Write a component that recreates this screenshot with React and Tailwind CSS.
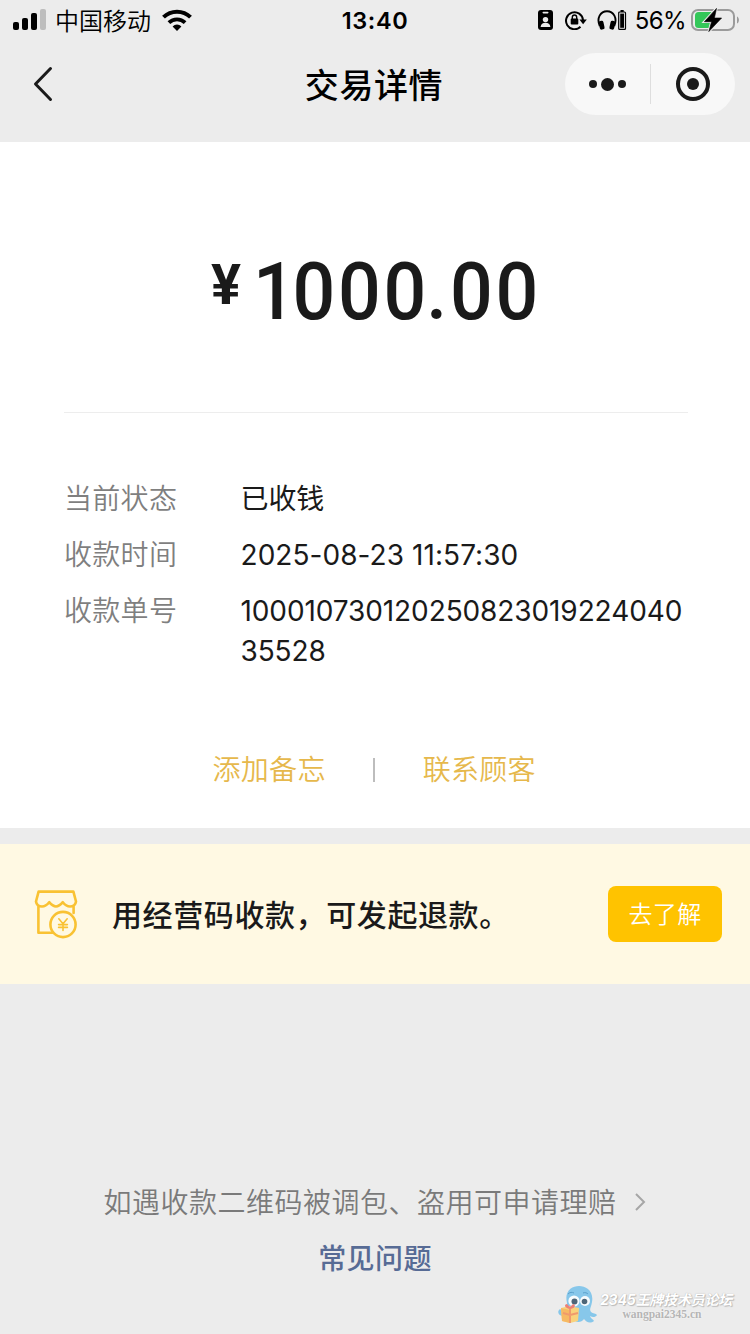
const details = [
  { label: "当前状态", value: "已收钱", tracking: "tracking-[-0.100px]" },
  { label: "收款时间", value: "2025-08-23 11:57:30", tracking: "tracking-[0.060px]" },
  { label: "收款单号", value: "100010730120250823019224040 35528", tracking: "tracking-[-0.100px]" },
];

function SignalIcon() {
  return (
    <svg width="33" height="22" viewBox="0 0 33 22">
      <rect x="0" y="13" width="6" height="8" rx="2" fill="#000" />
      <rect x="9" y="9" width="6" height="12" rx="2" fill="#000" />
      <rect x="18" y="4" width="6" height="17" rx="2" fill="#000" />
      <rect x="27" y="0" width="6" height="21" rx="2" fill="#bdbdbd" />
    </svg>
  );
}

function WifiIcon() {
  return (
    <svg width="30" height="22" viewBox="0 0 30 22">
      <path d="M1.5 8.2a19.2 19.2 0 0 1 27 0" fill="none" stroke="#000" strokeWidth="4" />
      <path d="M6.9 13.6a11.6 11.6 0 0 1 16.2 0" fill="none" stroke="#000" strokeWidth="3.8" />
      <path d="M15 22l-4.4-4.6a6.2 6.2 0 0 1 8.8 0z" fill="#000" />
    </svg>
  );
}

function BadgeIcon() {
  return (
    <svg width="15" height="20" viewBox="0 0 15 20">
      <rect width="15" height="20" rx="3" fill="#000" />
      <rect x="4.5" y="1.8" width="6" height="1.6" rx=".8" fill="#ececec" />
      <circle cx="7.5" cy="9.6" r="2.7" fill="#ececec" />
      <path d="M2.6 17c.4-2.9 2.1-4.2 4.9-4.2s4.5 1.3 4.9 4.2z" fill="#ececec" />
    </svg>
  );
}

function RotationLockIcon() {
  return (
    <svg width="22" height="20" viewBox="0 0 22 20">
      <path d="M15.5 16.8A8.5 8.5 0 1 1 18 10" fill="none" stroke="#000" strokeWidth="2" />
      <path d="M14.4 9.6h7.4l-3.7 4.6z" fill="#000" />
      <rect x="5.7" y="8.6" width="7.6" height="5.8" rx="1" fill="#000" />
      <path d="M7.3 9V7.2a2.2 2.2 0 0 1 4.4 0V9" fill="none" stroke="#000" strokeWidth="1.4" />
    </svg>
  );
}

function HeadphonesIcon() {
  return (
    <svg width="30" height="20" viewBox="0 0 30 20">
      <path d="M2.8 16C-.8 8 3.5 1.3 10 1.3S20.8 8 17.2 16" fill="none" stroke="#000" strokeWidth="1.9" />
      <rect x="2.2" y="10.8" width="4.8" height="8.8" rx="1.8" fill="#000" transform="rotate(-12 4.6 15)" />
      <rect x="13" y="10.8" width="4.8" height="8.8" rx="1.8" fill="#000" transform="rotate(12 15.4 15)" />
      <rect x="21.7" y="2" width="6.8" height="17.4" rx="1" fill="none" stroke="#000" strokeWidth="1.2" />
      <rect x="23.2" y="3.6" width="3.8" height="14.2" fill="#000" />
      <rect x="23.5" y="0" width="3.2" height="2" fill="#000" />
    </svg>
  );
}

function BatteryIcon() {
  return (
    <svg width="49" height="24" viewBox="0 0 49 24">
      <rect x="1" y="2" width="42" height="20" rx="6" fill="none" stroke="#9b9b9b" strokeWidth="2" />
      <path d="M46 8.5c2.6 1 2.6 6 0 7z" fill="#9b9b9b" />
      <path d="M7.5 4H21v16H7.5A3.5 3.5 0 0 1 4 16.500v-9A3.500 3.500 0 0 1 7.500 4z" fill="#34c759" />
      <path d="M25.500.4L13.400 13.700h7.200L17.800 23.600 30.600 10h-7.200z" fill="#ececec" stroke="#ececec" strokeWidth="2.600" />
      <path d="M25.500.4L13.400 13.700h7.200L17.800 23.600 30.600 10h-7.200z" fill="#000" stroke="#000" strokeWidth=".6" />
    </svg>
  );
}

function ShopIcon() {
  return (
    <svg width="44" height="50" viewBox="0 0 44 50" fill="none" stroke="#f9c233" strokeWidth="2.600" strokeLinejoin="round" strokeLinecap="round">
      <path d="M4.600 2.600H39.400L42 12.500C41.500 16 39 17.500 36 17.500S31 16 28.800 13.200C26.500 16 24.500 17.500 22 17.500S17.500 16 15.200 13.200C13 16 11 17.500 8 17.500S2.500 16 2 12.500Z" />
      <path d="M4.400 18v25.800h14M39.600 18v6" />
      <circle cx="29" cy="35.500" r="12.600" />
      <path d="M24.800 29.800l4.200 5 4.200-5M29 34.800v6.600M24.600 35.600h8.800M24.600 38.400h8.800" strokeWidth="1.600" />
    </svg>
  );
}

function Octopus() {
  return (
    <svg width="40" height="40" viewBox="0 0 40 40">
      <path d="M9 18C6 6 14 1 21 1s15 5 13 16c-1 6-3 7-1 10 2 2 5 1 6 3-2 3-5 2-7 1 1 3 3 3 4 5-4 3-8 1-10-2-2 3-6 4-9 2L4 31c-4-1-5-5-2-7 2 2 5 2 7 1z" fill="#87c7ea" />
      <circle cx="16" cy="16" r="5.600" fill="#f7fbfd" />
      <circle cx="27" cy="16" r="5" fill="#f7fbfd" />
      <circle cx="16.500" cy="16.500" r="3" fill="#4d6678" />
      <circle cx="26.500" cy="16.500" r="2.800" fill="#4d6678" />
      <path d="M10 9c2-2 4-2 6-1M25 8c2-1 4 0 5 1" fill="none" stroke="#5b9fca" strokeWidth="1" />
      <path d="M3 23l8-2 10 2-1 13-8 2-8-2z" fill="#f9d27c" />
      <path d="M3 23l9 2v13l-8-2z" fill="#f6b964" />
      <path d="M12 24v14M5 28l7 2 8-2" fill="none" stroke="#f09a6c" strokeWidth="2" />
      <path d="M12 24c-6-1-6-5-3-5l3 3 3-3c4 1 1 5-3 5z" fill="#ec8177" />
    </svg>
  );
}

function StatusBar() {
  return (
    <div className="grid h-10 grid-cols-[1fr_auto_1fr] items-center text-black">
      <div className="flex items-center pl-[13px]">
        <SignalIcon />
        <span className="ml-[9px] mr-[11px] pt-[3px] text-[24px] font-[350] leading-[37px]">中国移动</span>
        <WifiIcon />
      </div>
      <span className="pt-[2px] text-[23.5px] font-semibold leading-[38px] tracking-[0.6px]">13:40</span>
      <div className="flex items-center justify-end pr-[10px]">
        <BadgeIcon />
        <span className="ml-[12px] flex"><RotationLockIcon /></span>
        <span className="ml-[10px] flex"><HeadphonesIcon /></span>
        <span className="ml-[8px] mr-[5px] pt-[2px] text-[24px] leading-[38px] tracking-[-0.6px]">56%</span>
        <BatteryIcon />
      </div>
    </div>
  );
}

function NavBar() {
  return (
    <div className="grid h-[102px] grid-cols-[1fr_auto_1fr] items-start">
      <svg className="ml-[33px] mt-[26px]" width="20" height="36" viewBox="0 0 20 36">
        <path d="M17.5 2.5L2.5 18l15 15.5" fill="none" stroke="#1a1a1a" strokeWidth="3" strokeLinecap="round" strokeLinejoin="round" />
      </svg>
      <h1 className="mt-[22px] pr-[2px] text-[34px] font-medium leading-[48px] tracking-[0.6px] text-black">交易详情</h1>
      <div className="mr-[15px] mt-[13px] flex h-[62px] w-[170px] items-center justify-self-end rounded-full bg-[#f8f8f8]">
        <div className="flex flex-1 items-center justify-center gap-1">
          <span className="size-2 rounded-full bg-[#1a1a1a]" />
          <span className="size-[13px] rounded-full bg-[#1a1a1a]" />
          <span className="size-2 rounded-full bg-[#1a1a1a]" />
        </div>
        <div className="h-10 w-px bg-[#dedede]" />
        <div className="flex flex-1 items-center justify-center">
          <div className="flex size-[34px] items-center justify-center rounded-full border-4 border-[#1a1a1a]">
            <span className="size-3 rounded-full bg-[#1a1a1a]" />
          </div>
        </div>
      </div>
    </div>
  );
}

export default function App() {
  return (
    <div className="flex h-[1334px] w-[750px] flex-col overflow-hidden bg-[#ececec] font-[Inter,'Noto_Sans_CJK_SC',sans-serif]">
      <StatusBar />
      <NavBar />

      <main className="h-[686px] bg-white pl-16 pr-[62px]">
        <div className="flex h-[271px] items-start border-b border-[#ededed] pl-[147px] pt-[102px] font-[Roboto,sans-serif] text-[#1a1a1a]">
          <span className="mt-[11px] w-[42px] text-[56px] font-bold leading-[60px]">¥</span>
          <span className="origin-left scale-x-94 text-[80px] font-medium leading-[96px] tracking-[3px]">
            <span className="tracking-[-3.500px]">1</span>00<span className="tracking-[0px]">0</span>.00
          </span>
        </div>

        <dl className="mt-[66px] flex flex-col gap-4">
          {details.map((d) => (
            <div key={d.label} className="flex text-[28px] leading-10">
              <dt className="w-[176.5px] shrink-0 pt-px font-[350] leading-[39px] tracking-[0.3px] text-[#7f7f7f]">{d.label}</dt>
              <dd className={`w-[446px] text-[#1a1a1a] ${d.tracking}`}>{d.value}</dd>
            </div>
          ))}
        </dl>

        <div className="mt-[79px] flex items-center pl-[148.5px] text-[28px] font-[350] leading-10 tracking-[0.3px] text-[#e6b84c]">
          <button>添加备忘</button>
          <span className="mx-[47.5px] h-6 w-[2px] bg-[#bdbdbd]" />
          <button>联系顾客</button>
        </div>
      </main>

      <section className="mt-4 flex h-[140px] items-center bg-[#fff9e3] pl-[34px] pr-7">
        <ShopIcon />
        <p className="ml-[34px] flex-1 pt-[2px] text-[30px] font-medium tracking-[0.6px] text-[#1a1a1a]">用经营码收款，可发起退款。</p>
        <button className="h-14 w-[114px] rounded-lg bg-[#ffc300] pt-[2px] text-[24px] font-[350] tracking-[0.3px] text-white">去了解</button>
      </section>

      <footer className="mt-[199px] flex flex-col items-center">
        <a className="flex items-center text-[28px] font-[350] leading-10 tracking-[0.5px] text-[#7a7a7a]">
          如遇收款二维码被调包、盗用可申请理赔
          <svg className="ml-[18px]" width="12" height="20" viewBox="0 0 12 20">
            <path d="M1 1l8 8-8 8" fill="none" stroke="#a6a6a6" strokeWidth="2" />
          </svg>
        </a>
        <a className="mt-4 text-[28px] font-medium leading-10 tracking-[0.4px] text-[#576b95]">常见问题</a>
      </footer>

      <div className="mt-[6px] flex items-start self-end pr-[18px]">
        <Octopus />
        <div className="ml-[2px] mt-[6px] flex flex-col items-center whitespace-nowrap text-white">
          <span className="text-[14px] font-bold italic leading-[18px] tracking-[-0.2px] [text-shadow:0_0_1px_#aaa,1px_1px_1px_#bbb]">2345王牌技术员论坛</span>
          <span className="pr-2 font-['Liberation_Serif',serif] text-[11.5px] font-bold leading-[11px] text-[#b5b5b5] [text-shadow:0_0_2px_#fff]">wangpai2345.cn</span>
        </div>
      </div>
    </div>
  );
}
